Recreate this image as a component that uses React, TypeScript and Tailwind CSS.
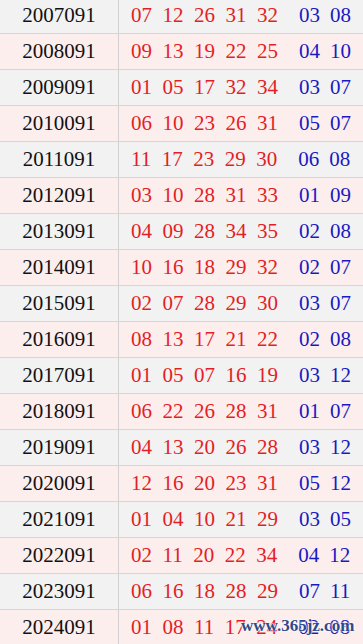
import React from 'react';

type Draw = { issue: string; red: string[]; blue: string[] };

const draws: Draw[] = [
  { issue: '2007091', red: ['07', '12', '26', '31', '32'], blue: ['03', '08'] },
  { issue: '2008091', red: ['09', '13', '19', '22', '25'], blue: ['04', '10'] },
  { issue: '2009091', red: ['01', '05', '17', '32', '34'], blue: ['03', '07'] },
  { issue: '2010091', red: ['06', '10', '23', '26', '31'], blue: ['05', '07'] },
  { issue: '2011091', red: ['11', '17', '23', '29', '30'], blue: ['06', '08'] },
  { issue: '2012091', red: ['03', '10', '28', '31', '33'], blue: ['01', '09'] },
  { issue: '2013091', red: ['04', '09', '28', '34', '35'], blue: ['02', '08'] },
  { issue: '2014091', red: ['10', '16', '18', '29', '32'], blue: ['02', '07'] },
  { issue: '2015091', red: ['02', '07', '28', '29', '30'], blue: ['03', '07'] },
  { issue: '2016091', red: ['08', '13', '17', '21', '22'], blue: ['02', '08'] },
  { issue: '2017091', red: ['01', '05', '07', '16', '19'], blue: ['03', '12'] },
  { issue: '2018091', red: ['06', '22', '26', '28', '31'], blue: ['01', '07'] },
  { issue: '2019091', red: ['04', '13', '20', '26', '28'], blue: ['03', '12'] },
  { issue: '2020091', red: ['12', '16', '20', '23', '31'], blue: ['05', '12'] },
  { issue: '2021091', red: ['01', '04', '10', '21', '29'], blue: ['03', '05'] },
  { issue: '2022091', red: ['02', '11', '20', '22', '34'], blue: ['04', '12'] },
  { issue: '2023091', red: ['06', '16', '18', '28', '29'], blue: ['07', '11'] },
  { issue: '2024091', red: ['01', '08', '11', '17', '24'], blue: ['02', '08'] },
];

const Row = ({ d, i }: { d: Draw; i: number }) => (
  <div
    className={
      'flex h-[36px] border-b border-[#d6d6d6] ' +
      (i % 2 === 0 ? 'bg-[#f2f2f2]' : 'bg-[#fdeeee]')
    }
  >
    <div className="w-[119px] shrink-0 border-r border-[#d0d0d0] flex items-center justify-center text-[#111]">
      {d.issue}
    </div>
    <div className="flex items-center pl-[12px]">
      <div className="flex gap-[10.5px] text-[#e41e25]">
        {d.red.map((n, k) => (
          <span key={k}>{n}</span>
        ))}
      </div>
      <div className="flex gap-[10px] ml-[21px] text-[#1a1ac4]">
        {d.blue.map((n, k) => (
          <span key={k}>{n}</span>
        ))}
      </div>
    </div>
  </div>
);

export default function App() {
  return (
    <div className="relative w-[363px] h-[644px] overflow-hidden bg-white font-['Liberation_Serif',serif] text-[21px] leading-none">
      <div className="-mt-[2px]">
        {draws.map((d, i) => (
          <Row key={d.issue} d={d} i={i} />
        ))}
      </div>
      <div className="absolute left-[241px] top-[617px] text-[17px] font-bold text-[#2f4a88] [text-shadow:0_0_2px_#fff,0_0_2px_#fff,0_0_1px_#fff]">
        www.365jz.com
      </div>
    </div>
  );
}
